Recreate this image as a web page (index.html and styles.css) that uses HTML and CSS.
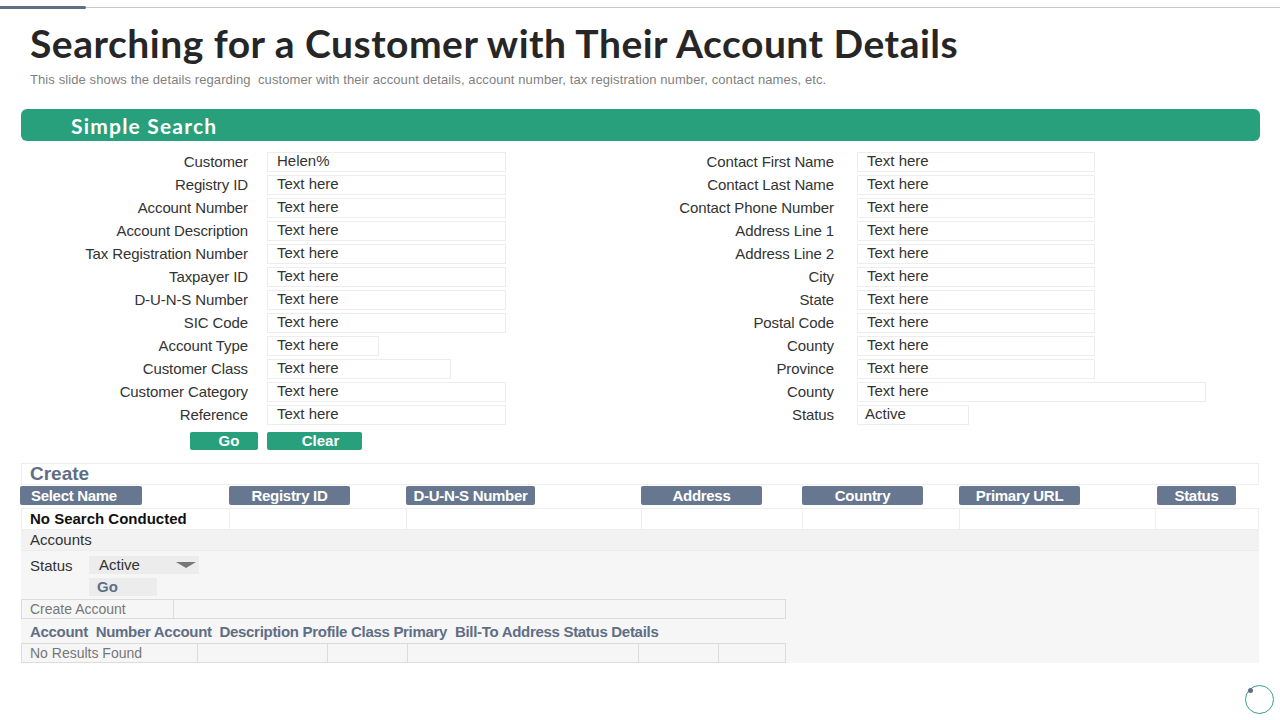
FILE: index.html
```html
<!DOCTYPE html>
<html>
<head>
<meta charset="utf-8">
<link rel="stylesheet" href="styles.css">
</head>
<body>
<div class="topbar"><div class="seg"></div><div class="rule"></div></div>
<header class="head">
  <h1 class="title">Searching for a Customer with Their Account Details</h1>
  <p class="subtitle">This slide shows the details regarding&nbsp; customer with their account details, account number, tax registration number, contact names, etc.</p>
</header>
<main class="page">
  <div class="band">Simple Search</div>
  <div class="form">
    <div class="col col-left">
      <div class="row"><span class="lbl">Customer</span><span class="inp w238">Helen%</span></div>
      <div class="row"><span class="lbl">Registry ID</span><span class="inp w238">Text here</span></div>
      <div class="row"><span class="lbl">Account Number</span><span class="inp w238">Text here</span></div>
      <div class="row"><span class="lbl">Account Description</span><span class="inp w238">Text here</span></div>
      <div class="row"><span class="lbl">Tax Registration Number</span><span class="inp w238">Text here</span></div>
      <div class="row"><span class="lbl">Taxpayer ID</span><span class="inp w238">Text here</span></div>
      <div class="row"><span class="lbl">D-U-N-S Number</span><span class="inp w238">Text here</span></div>
      <div class="row"><span class="lbl">SIC Code</span><span class="inp w238">Text here</span></div>
      <div class="row"><span class="lbl">Account Type</span><span class="inp w111">Text here</span></div>
      <div class="row"><span class="lbl">Customer Class</span><span class="inp w183">Text here</span></div>
      <div class="row"><span class="lbl">Customer Category</span><span class="inp w238">Text here</span></div>
      <div class="row"><span class="lbl">Reference</span><span class="inp w238">Text here</span></div>
      <div class="btns"><span class="btn go">Go</span><span class="btn clear">Clear</span></div>
    </div>
    <div class="col col-right">
      <div class="row"><span class="lbl">Contact First Name</span><span class="inp w237">Text here</span></div>
      <div class="row"><span class="lbl">Contact Last Name</span><span class="inp w237">Text here</span></div>
      <div class="row"><span class="lbl">Contact Phone Number</span><span class="inp w237">Text here</span></div>
      <div class="row"><span class="lbl">Address Line 1</span><span class="inp w237">Text here</span></div>
      <div class="row"><span class="lbl">Address Line 2</span><span class="inp w237">Text here</span></div>
      <div class="row"><span class="lbl">City</span><span class="inp w237">Text here</span></div>
      <div class="row"><span class="lbl">State</span><span class="inp w237">Text here</span></div>
      <div class="row"><span class="lbl">Postal Code</span><span class="inp w237">Text here</span></div>
      <div class="row"><span class="lbl">County</span><span class="inp w237">Text here</span></div>
      <div class="row"><span class="lbl">Province</span><span class="inp w237">Text here</span></div>
      <div class="row"><span class="lbl">County</span><span class="inp w348">Text here</span></div>
      <div class="row"><span class="lbl">Status</span><span class="inp w111 tight">Active</span></div>
    </div>
  </div>

  <section class="create">
    <div class="create-title">Create</div>
    <div class="grid heads">
      <div class="hc"><span class="pill" style="width:122px">Select Name</span></div>
      <div class="hc"><span class="pill" style="width:121px">Registry ID</span></div>
      <div class="hc"><span class="pill" style="width:129px">D-U-N-S Number</span></div>
      <div class="hc"><span class="pill" style="width:121px">Address</span></div>
      <div class="hc"><span class="pill" style="width:121px">Country</span></div>
      <div class="hc"><span class="pill" style="width:121px">Primary URL</span></div>
      <div class="hc hc-last"><span class="pill" style="width:79px">Status</span></div>
    </div>
    <div class="grid cells">
      <div class="cell strong">No Search Conducted</div>
      <div class="cell"></div>
      <div class="cell"></div>
      <div class="cell"></div>
      <div class="cell"></div>
      <div class="cell"></div>
      <div class="cell"></div>
    </div>
    <div class="accounts">
      <div class="acc-title">Accounts</div>
      <div class="acc-status">
        <span class="acc-lbl">Status</span>
        <span class="select">Active<span class="caret"></span></span>
      </div>
      <div class="acc-go"><span class="gobox">Go</span></div>
      <div class="tbl create-acc">
        <div class="tc" style="width:152px">Create Account</div>
        <div class="tc grow"></div>
      </div>
      <div class="acc-heads">Account&nbsp; Number Account&nbsp; Description Profile Class Primary&nbsp; Bill-To Address Status Details</div>
      <div class="tbl results">
        <div class="tc" style="width:176px">No Results Found</div>
        <div class="tc" style="width:130px"></div>
        <div class="tc" style="width:80px"></div>
        <div class="tc" style="width:231px"></div>
        <div class="tc" style="width:80px"></div>
        <div class="tc grow"></div>
      </div>
    </div>
  </section>
</main>
<div class="corner"><span class="dot"></span></div>
</body>
</html>
```

FILE: styles.css
```css
* { box-sizing: border-box; }
html, body { margin: 0; padding: 0; background: #ffffff; }
body {
  width: 1280px;
  height: 720px;
  overflow: hidden;
  position: relative;
  font-family: "Liberation Sans", Arial, sans-serif;
  color: #333333;
}
.topbar {
  display: flex;
  align-items: flex-end;
  padding-top: 6px;
  height: 9px;
}
.seg { width: 86px; height: 3px; background: #5f6e85; border-radius: 0 2px 2px 0; }
.rule { flex: 1; height: 1px; background: #c9c9c9; margin-bottom: 1px; }

.head { padding: 0 0 0 30px; }
.title {
  margin: 12px 0 0 0;
  font-family: "Lato", "DejaVu Sans", sans-serif;
  font-weight: 700;
  font-size: 39px;
  line-height: 44px;
  letter-spacing: 0.5px;
  color: #262626;
  white-space: nowrap;
}
.subtitle {
  margin: 7px 0 0 0;
  font-size: 13px;
  line-height: 16px;
  color: #7f7f7f;
  letter-spacing: 0.1px;
  white-space: nowrap;
}

.page { padding: 0 0 0 21px; width: 1260px; }
.band {
  margin-top: 21px;
  height: 32px;
  background: #27a07b;
  border-radius: 6px;
  color: #ffffff;
  font-family: "Lato", "DejaVu Sans", sans-serif;
  font-weight: 700;
  font-size: 21px;
  line-height: 33px;
  padding-left: 50px;
  letter-spacing: 1.2px;
}

.form { display: flex; padding-top: 9px; }
.col { display: flex; flex-direction: column; }
.col-left { width: 560px; }
.col-left .lbl { width: 227px; margin-right: 19px; }
.col-right .lbl { width: 253px; margin-right: 23px; }
.row { display: flex; align-items: center; height: 23px; }
.lbl {
  text-align: right;
  font-size: 15px;
  color: #333333;
  white-space: nowrap;
  letter-spacing: -0.1px;
}
.inp {
  height: 20px;
  border: 1px solid #ededed;
  font-size: 15px;
  line-height: 16px;
  padding: 0 0 2px 9px;
  color: #333333;
  display: flex;
  align-items: center;
  white-space: nowrap;
}
.tight { padding-left: 7px; }
.w238 { width: 239px; }
.w237 { width: 238px; }
.w111 { width: 112px; }
.w183 { width: 184px; }
.w348 { width: 349px; }

.btns { display: flex; gap: 9px; padding-left: 169px; margin-top: 6px; }
.btn {
  height: 18px;
  background: #27a07b;
  color: #ffffff;
  font-weight: 700;
  font-size: 15px;
  line-height: 18px;
  text-align: center;
  padding-left: 10px;
  border-radius: 2px;
}
.go { width: 68px; }
.clear { width: 95px; padding-left: 12px; }

.create { margin-top: 13px; width: 1238px; }
.create-title {
  height: 22px;
  border: 1px solid #eeeeee;
  color: #5f6e85;
  font-weight: 700;
  font-size: 19px;
  line-height: 20px;
  padding-left: 8px;
}
.grid {
  display: grid;
  grid-template-columns: 208px 177px 235px 161px 157px 196px 104px;
}
.heads { height: 23px; padding-top: 1px; }
.hc { display: flex; }
.hc:first-child { margin-left: -1px; }
.hc-last { padding-left: 2px; }
.pill {
  height: 19px;
  background: #66778f;
  color: #ffffff;
  font-weight: 700;
  font-size: 15px;
  line-height: 19px;
  text-align: center;
  letter-spacing: -0.3px;
  border-radius: 2px;
  white-space: nowrap;
}
.heads .hc:first-child .pill { text-align: left; padding-left: 11px; }
.cells { height: 22px; }
.cell {
  border: 1px solid #eeeeee;
  border-right: none;
  height: 22px;
}
.cell:last-child { border-right: 1px solid #eeeeee; }
.strong {
  font-weight: 700;
  font-size: 15px;
  line-height: 20px;
  color: #111111;
  padding-left: 8px;
  white-space: nowrap;
}

.accounts { background: #f6f6f6; height: 133px; }
.acc-title {
  height: 21px;
  background: #f2f2f2;
  border-bottom: 1px solid #ececec;
  font-size: 15px;
  line-height: 20px;
  padding-left: 9px;
  color: #333333;
}
.acc-status { display: flex; align-items: center; height: 24px; padding-top: 4px; }
.acc-lbl { width: 68px; padding-left: 9px; font-size: 15px; color: #333333; }
.select {
  width: 110px;
  height: 18px;
  background: #ececec;
  font-size: 15px;
  line-height: 18px;
  padding-left: 10px;
  position: relative;
  color: #333333;
}
.caret {
  position: absolute;
  right: 3px;
  top: 6px;
  width: 0;
  height: 0;
  border-left: 10px solid transparent;
  border-right: 10px solid transparent;
  border-top: 6px solid #777777;
}
.acc-go { height: 24px; padding-left: 68px; padding-top: 3px; }
.gobox {
  display: block;
  width: 68px;
  height: 18px;
  background: #ececec;
  color: #5f6e85;
  font-weight: 700;
  font-size: 15px;
  line-height: 18px;
  padding-left: 8px;
}
.tbl { display: flex; width: 765px; height: 20px; }
.tc {
  height: 20px;
  border: 1px solid #dcdcdc;
  border-right: none;
  font-size: 14px;
  line-height: 18px;
  color: #777777;
  padding-left: 8px;
  white-space: nowrap;
}
.tc:last-child { border-right: 1px solid #dcdcdc; }
.grow { flex: 1; }
.acc-heads {
  height: 24px;
  padding-top: 4px;
  padding-left: 9px;
  font-weight: 700;
  font-size: 15px;
  line-height: 18px;
  color: #5f6e85;
  white-space: nowrap;
  letter-spacing: -0.3px;
}

.corner {
  position: absolute;
  left: 1245px;
  top: 685px;
  width: 29px;
  height: 29px;
  border: 1px solid #3a9d8a;
  border-radius: 50%;
}
.dot {
  position: absolute;
  left: 2px;
  top: 2px;
  width: 5px;
  height: 5px;
  border-radius: 50%;
  background: #5f6e85;
}
```
